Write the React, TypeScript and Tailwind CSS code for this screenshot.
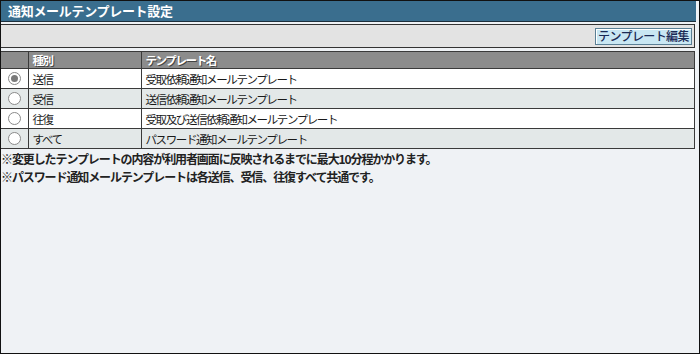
import React from 'react';

const rows = [
  { type: '送信', name: '受取依頼通知メールテンプレート', checked: true },
  { type: '受信', name: '送信依頼通知メールテンプレート', checked: false },
  { type: '往復', name: '受取及び送信依頼通知メールテンプレート', checked: false },
  { type: 'すべて', name: 'パスワード通知メールテンプレート', checked: false },
];

const Radio: React.FC<{ checked: boolean }> = ({ checked }) => (
  <span className="mx-auto flex h-[13px] w-[13px] items-center justify-center rounded-full border border-[#8a8a8a] bg-white">
    {checked && <span className="h-[7px] w-[7px] rounded-full bg-[#7a7a7a]" />}
  </span>
);

export default function App() {
  return (
    <div
      className="h-[354px] w-[700px] border border-[#111] bg-[#eff2f5] text-[#1a1a1a]"
      style={{ fontFamily: '"Noto Sans CJK JP", sans-serif' }}
    >
      <div className="mr-[3px] h-[21px] border-b border-[#1d2f3c] bg-[#3a6e8e] pl-[7px] text-[13px] font-bold leading-[20px] text-white tracking-[-0.3px]">
        通知メールテンプレート設定
      </div>

      <div className="mr-[4px] mt-[2px] flex h-[24px] items-center justify-end border-y border-r border-[#333] bg-[#e3e3e3] pr-[2px]">
        <button className="h-[17px] w-[97px] border border-[#5a7f95] bg-[#c9e7f3] text-[12px] font-medium leading-[14px] text-[#1b2a55] tracking-[-0.6px] shadow-[inset_1px_1px_0_#fff]">
          テンプレート編集
        </button>
      </div>

      <table className="mr-[4px] mt-[3px] w-[694px] border-collapse text-[11.5px] tracking-[-1.4px]">
        <thead>
          <tr className="bg-[#8c8c8c] text-white font-bold">
            <th className="h-[17px] w-[27px] border border-[#3a3a3a] border-l-0 p-0 leading-[15px]" />
            <th className="w-[113px] border border-[#3a3a3a] p-0 pl-[4px] text-left leading-[15px] [text-shadow:1px_1px_0_#444]">種別</th>
            <th className="border border-[#3a3a3a] p-0 pl-[4px] text-left leading-[15px] [text-shadow:1px_1px_0_#444]">テンプレート名</th>
          </tr>
        </thead>
        <tbody>
          {rows.map((r, i) => (
            <tr key={r.type} className={i % 2 === 0 ? 'bg-white' : 'bg-[#e3e8e8]'}>
              <td className="h-[20px] border border-[#3a3a3a] border-l-0 p-0 align-middle leading-[18px]">
                <Radio checked={r.checked} />
              </td>
              <td className="border border-[#3a3a3a] p-0 pl-[4px] leading-[18px]">{r.type}</td>
              <td className="border border-[#3a3a3a] p-0 pl-[4px] leading-[18px]">{r.name}</td>
            </tr>
          ))}
        </tbody>
      </table>

      <div className="mt-[1px] text-[12px] font-bold leading-[18px] tracking-[-1.1px] text-[#222]">
        <p>※変更したテンプレートの内容が利用者画面に反映されるまでに最大10分程かかります。</p>
        <p>※パスワード通知メールテンプレートは各送信、受信、往復すべて共通です。</p>
      </div>
    </div>
  );
}
